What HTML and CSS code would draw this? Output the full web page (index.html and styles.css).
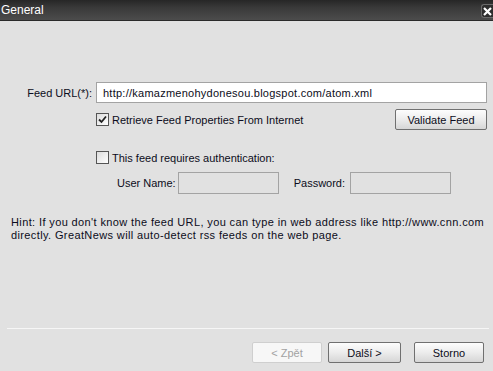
FILE: index.html
```html
<!DOCTYPE html>
<html lang="en">
<head>
    <meta charset="UTF-8">
    <title>General</title>
    <link rel="stylesheet" href="styles.css">
</head>
<body>
    <div class="dialog">
        <header class="titlebar">
            <span class="title">General</span>
            <span class="close-btn">
                <svg width="9" height="9" viewBox="0 0 9 9">
                    <path d="M1 1 L8 8 M8 1 L1 8" stroke="#fff" stroke-width="2.2"/>
                </svg>
            </span>
        </header>

        <div class="content">
            <div class="row url-row">
                <label class="url-label" for="feedUrl">Feed URL(*):</label>
                <input type="text" id="feedUrl" class="text-input url-input" value="http://kamazmenohydonesou.blogspot.com/atom.xml">
            </div>

            <div class="row retrieve-row">
                <span class="check checked">
                    <svg width="9" height="9" viewBox="0 0 9 9">
                        <path d="M1 4.5 L3.5 7 L8 1.5" fill="none" stroke="#222" stroke-width="1.8"/>
                    </svg>
                </span>
                <span class="check-text">Retrieve Feed Properties From Internet</span>
                <button class="btn validate-btn">Validate Feed</button>
            </div>

            <div class="row auth-row">
                <span class="check"></span>
                <span class="check-text">This feed requires authentication:</span>
            </div>

            <div class="row cred-row">
                <span class="cred-label">User Name:</span>
                <input type="text" class="text-input cred-input" disabled>
                <span class="cred-label pass-label">Password:</span>
                <input type="password" class="text-input cred-input pass-input" disabled>
            </div>

            <p class="hint">Hint: If you don't know the feed URL, you can type in web address like http://www.cnn.com<br>directly. GreatNews will auto-detect rss feeds on the web page.</p>
        </div>

        <footer class="footer">
            <div class="separator"></div>
            <div class="buttons">
                <button class="btn back-btn" disabled>&lt; Zpět</button>
                <button class="btn next-btn">Další &gt;</button>
                <button class="btn cancel-btn">Storno</button>
            </div>
        </footer>
    </div>
</body>
</html>
```

FILE: styles.css
```css
* {
    margin: 0;
    padding: 0;
    box-sizing: border-box;
    font-family: "Liberation Sans", Arial, sans-serif;
}

body {
    background-color: #e1e1e1;
    color: #0c0c20;
    font-size: 11px;
    height: 100vh;
    overflow: hidden;
}

.dialog {
    height: 100vh;
    display: flex;
    flex-direction: column;
}

.titlebar {
    height: 21px;
    display: flex;
    justify-content: space-between;
    align-items: flex-start;
    background: linear-gradient(#262626, #3a3a3a 40%, #4c4c4c);
    border-bottom: 1px solid #2a2a2a;
}

.title {
    color: #fff;
    font-size: 12px;
    line-height: 20px;
    padding-left: 1px;
}

.close-btn {
    width: 12px;
    height: 14px;
    margin-top: 4px;
    display: flex;
    align-items: center;
    justify-content: center;
    background-color: #2e2e2e;
    border: 1px solid #6a6a6a;
    border-right: none;
    border-radius: 3px 0 0 3px;
}

.content {
    padding-top: 61px;
}

.row {
    display: flex;
    align-items: center;
}

.url-label {
    width: 96px;
    padding-right: 4px;
    text-align: right;
}

.text-input {
    height: 21px;
    border: 1px solid #a3a3a3;
    background-color: #fff;
    color: #0c0c20;
    font-size: 11px;
    padding: 0 4px;
}

.url-input {
    width: 391px;
    padding-left: 6px;
    letter-spacing: 0.25px;
}

.retrieve-row {
    margin-top: 6px;
    padding-left: 96px;
    padding-right: 6px;
}

.check {
    width: 13px;
    height: 13px;
    display: flex;
    align-items: center;
    justify-content: center;
    border: 1px solid #555;
    background: linear-gradient(135deg, #dcdcdc, #fff);
}

.check-text {
    margin-left: 3px;
}

.btn {
    height: 21px;
    width: 72px;
    border: 1px solid #707070;
    border-radius: 2px;
    background: linear-gradient(#fdfdfd, #ececec 50%, #d6d6d6);
    color: #0c0c20;
    font-size: 11px;
}

.btn:disabled {
    border-color: #cfcfcf;
    background: #f7f7f7;
    color: #a2a2a2;
}

.validate-btn {
    margin-left: auto;
    width: 92px;
}

.auth-row {
    margin-top: 21px;
    padding-left: 96px;
}

.cred-row {
    margin-top: 8px;
    padding-left: 117px;
}

.cred-input {
    width: 101px;
    height: 22px;
    margin-left: 2px;
    background-color: #e1e1e1;
}

.pass-label {
    margin-left: 15px;
}

.pass-input {
    margin-left: 5px;
}

.hint {
    margin-top: 22px;
    padding-left: 11px;
    line-height: 13px;
    letter-spacing: 0.38px;
}

.footer {
    margin-top: auto;
    padding-bottom: 8px;
}

.separator {
    height: 1px;
    margin: 0 4px 0 7px;
    background-color: #a7a7a7;
    border-bottom: 1px solid #f6f6f6;
}

.buttons {
    display: flex;
    justify-content: flex-end;
    gap: 6px;
    margin-top: 13px;
    padding-right: 9px;
}

.back-btn {
    width: 70px;
}

.next-btn {
    width: 73px;
}

.cancel-btn {
    margin-left: 7px;
    width: 70px;
}
```
